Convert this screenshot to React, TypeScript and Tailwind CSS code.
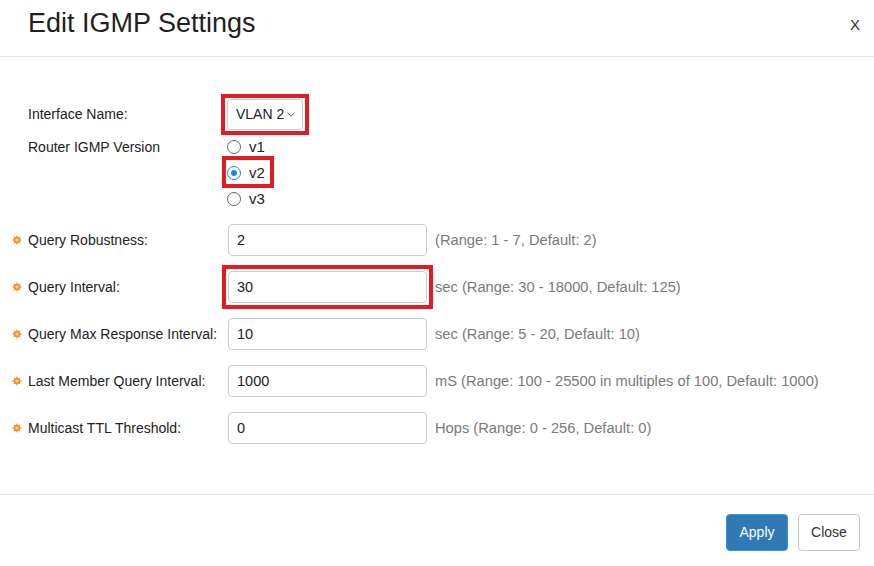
import { useState, type ReactNode } from "react";

type Field = {
  label: string;
  value: string;
  hint: string;
  marked?: boolean;
};

const fields: Field[] = [
  { label: "Query Robustness:", value: "2", hint: "(Range: 1 - 7, Default: 2)" },
  { label: "Query Interval:", value: "30", hint: "sec (Range: 30 - 18000, Default: 125)", marked: true },
  { label: "Query Max Response Interval:", value: "10", hint: "sec (Range: 5 - 20, Default: 10)" },
  {
    label: "Last Member Query Interval:",
    value: "1000",
    hint: "mS (Range: 100 - 25500 in multiples of 100, Default: 1000)",
  },
  { label: "Multicast TTL Threshold:", value: "0", hint: "Hops (Range: 0 - 256, Default: 0)" },
];

const versions = ["v1", "v2", "v3"];

// square red frame laid over a control
function Marker({ on, gap, children }: { on?: boolean; gap: string; children: ReactNode }) {
  return (
    <div className="relative">
      {children}
      {on && <span className={`pointer-events-none absolute border-4 border-[#e31b23] ${gap}`} />}
    </div>
  );
}

function RequiredMark() {
  const spikes = Array.from({ length: 8 }, (_, i) => i * 45);
  return (
    <svg width="10" height="10" viewBox="0 0 10 10" className="shrink-0">
      {spikes.map((deg) => (
        <polygon key={deg} points="4.1,2 5.9,2 5,0" fill="#f39324" transform={`rotate(${deg} 5 5)`} />
      ))}
      <circle cx="5" cy="5" r="3.3" fill="#f39324" />
      <circle cx="5" cy="5" r="1.6" fill="#fcd49a" />
    </svg>
  );
}

function Radio({ checked }: { checked: boolean }) {
  return (
    <span
      className={
        checked
          ? "flex h-[14px] w-[14px] items-center justify-center rounded-full border border-[#0f8fd8] bg-white"
          : "flex h-[14px] w-[14px] items-center justify-center rounded-full border border-[#666] bg-white"
      }
    >
      {checked && <span className="h-[6px] w-[6px] rounded-full bg-[#0f8fd8]" />}
    </span>
  );
}

export default function App() {
  const [version, setVersion] = useState("v2");

  return (
    <div className="h-[566px] w-[874px] bg-white font-['Liberation_Sans',Arial,sans-serif] text-[#222]">
      {/* header */}
      <div className="flex h-[57px] items-start justify-between border-b border-[#e5e5e5] pl-[28px] pr-[14px] pt-[8px]">
        <h1 className="text-[27px] leading-[30px] text-[#1f1f1f]">Edit IGMP Settings</h1>
        <button className="mt-[8px] text-[15px] leading-[17px] text-[#333]">X</button>
      </div>

      {/* body */}
      <div className="pb-[50px] pl-[12px] pt-[42px]">
        <div className="flex h-[31px] items-center">
          <div className="w-[215px] pl-[16px] text-[14px]">Interface Name:</div>
          <Marker on gap="-inset-x-[6px] -inset-y-[5px]">
            <div className="flex h-[31px] w-[76px] items-center justify-between rounded-[4px] border border-[#ccc] pl-[8px] pr-[7px] text-[14px]">
              <span>VLAN 2</span>
              <svg width="8" height="5" viewBox="0 0 8 5" fill="none">
                <path d="M0.5 0.8L4 4.2L7.5 0.8" stroke="#555" strokeWidth="1" />
              </svg>
            </div>
          </Marker>
        </div>

        <div className="mt-[4px] flex items-start">
          <div className="flex h-[26px] w-[215px] items-center pl-[16px] text-[14px]">Router IGMP Version</div>
          <div className="flex flex-col">
            {versions.map((v) => (
              <label key={v} onClick={() => setVersion(v)} className="flex h-[26px] cursor-pointer items-center">
                <Marker on={v === "v2"} gap="-left-[5px] -right-[9px] -top-[6px] -bottom-[4px]">
                  <span className="flex h-[22px] items-center gap-[8px] text-[15px]">
                    <Radio checked={version === v} />
                    {v}
                  </span>
                </Marker>
              </label>
            ))}
          </div>
        </div>

        <div className="mt-[12px] flex flex-col gap-[15px]">
          {fields.map((f) => (
            <div key={f.label} className="flex h-[32px] items-center">
              <RequiredMark />
              <div className="ml-[6px] w-[200px] text-[14px]">{f.label}</div>
              <Marker on={f.marked} gap="-inset-[6px]">
                <input
                  defaultValue={f.value}
                  className="block h-[32px] w-[199px] rounded-[4px] border border-[#ccc] px-[8px] text-[14.5px] text-[#222] outline-none"
                />
              </Marker>
              <span className="ml-[8px] text-[14.7px] text-[#7a7a7a]">{f.hint}</span>
            </div>
          ))}
        </div>
      </div>

      {/* footer */}
      <div className="flex justify-end gap-[10px] border-t border-[#e5e5e5] pr-[14px] pt-[19px]">
        <button className="h-[37px] w-[62px] rounded-[4px] border border-[#2b9ad6] bg-[#3079b5] text-[14px] text-white">
          Apply
        </button>
        <button className="h-[37px] w-[62px] rounded-[4px] border border-[#c8c8c8] bg-white text-[14px] text-[#333]">
          Close
        </button>
      </div>
    </div>
  );
}
